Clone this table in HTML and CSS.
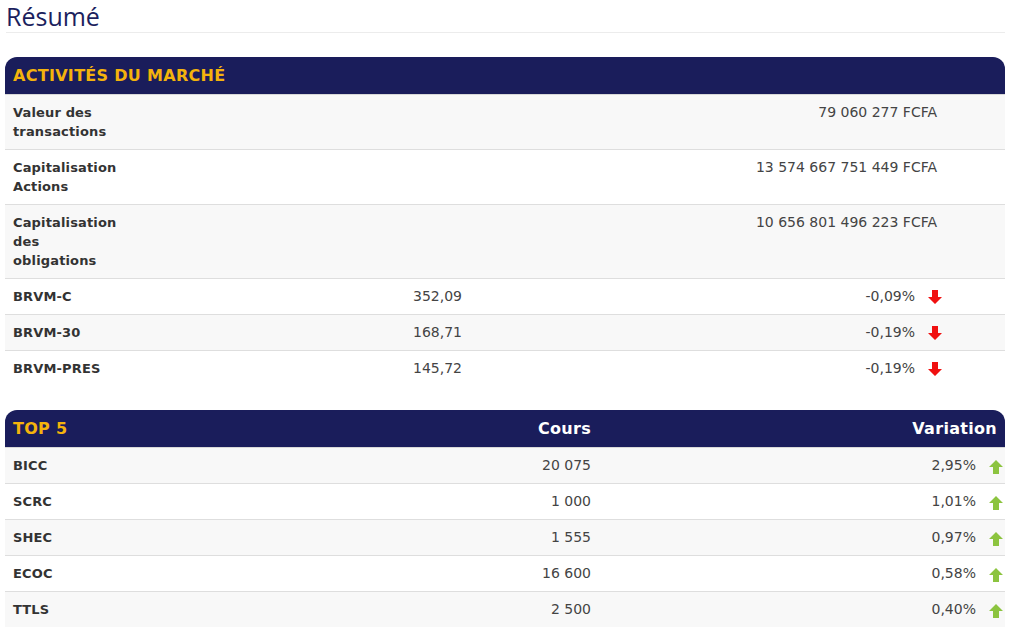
FILE: index.html
```html
<!DOCTYPE html>
<html lang="fr">
<head>
<meta charset="utf-8">
<title>Résumé</title>
<link rel="stylesheet" href="styles.css">
</head>
<body>
<div class="page">
  <h1 class="title">Résumé</h1>

  <section class="panel">
    <div class="panel-head"><span class="gold">ACTIVITÉS DU MARCHÉ</span></div>
    <div class="row big alt">
      <div class="lbl">Valeur des transactions</div>
      <div class="amt">79 060 277 FCFA</div>
      <div></div>
    </div>
    <div class="row big">
      <div class="lbl">Capitalisation Actions</div>
      <div class="amt">13 574 667 751 449 FCFA</div>
      <div></div>
    </div>
    <div class="row big alt">
      <div class="lbl">Capitalisation des obligations</div>
      <div class="amt">10 656 801 496 223 FCFA</div>
      <div></div>
    </div>
    <div class="row idx">
      <div class="lbl">BRVM-C</div>
      <div class="val">352,09</div>
      <div class="var">-0,09% <svg class="arr down" viewBox="0 0 14 14"><path d="M4 0h6v7h4l-7 7-7-7h4z" fill="#f01010"/></svg></div>
      <div></div>
    </div>
    <div class="row idx alt">
      <div class="lbl">BRVM-30</div>
      <div class="val">168,71</div>
      <div class="var">-0,19% <svg class="arr down" viewBox="0 0 14 14"><path d="M4 0h6v7h4l-7 7-7-7h4z" fill="#f01010"/></svg></div>
      <div></div>
    </div>
    <div class="row idx last">
      <div class="lbl">BRVM-PRES</div>
      <div class="val">145,72</div>
      <div class="var">-0,19% <svg class="arr down" viewBox="0 0 14 14"><path d="M4 0h6v7h4l-7 7-7-7h4z" fill="#f01010"/></svg></div>
      <div></div>
    </div>
  </section>

  <section class="panel top">
    <div class="panel-head top-head">
      <span class="gold">TOP 5</span>
      <span class="hcol">Cours</span>
      <span class="hcol">Variation</span>
    </div>
    <div class="row t5 alt">
      <div class="lbl">BICC</div>
      <div class="cours">20 075</div>
      <div class="var">2,95% <svg class="arr" viewBox="0 0 14 14"><path d="M4 14h6V7h4L7 0 0 7h4z" fill="#8cc43f"/></svg></div>
    </div>
    <div class="row t5">
      <div class="lbl">SCRC</div>
      <div class="cours">1 000</div>
      <div class="var">1,01% <svg class="arr" viewBox="0 0 14 14"><path d="M4 14h6V7h4L7 0 0 7h4z" fill="#8cc43f"/></svg></div>
    </div>
    <div class="row t5 alt">
      <div class="lbl">SHEC</div>
      <div class="cours">1 555</div>
      <div class="var">0,97% <svg class="arr" viewBox="0 0 14 14"><path d="M4 14h6V7h4L7 0 0 7h4z" fill="#8cc43f"/></svg></div>
    </div>
    <div class="row t5">
      <div class="lbl">ECOC</div>
      <div class="cours">16 600</div>
      <div class="var">0,58% <svg class="arr" viewBox="0 0 14 14"><path d="M4 14h6V7h4L7 0 0 7h4z" fill="#8cc43f"/></svg></div>
    </div>
    <div class="row t5 alt last">
      <div class="lbl">TTLS</div>
      <div class="cours">2 500</div>
      <div class="var">0,40% <svg class="arr" viewBox="0 0 14 14"><path d="M4 14h6V7h4L7 0 0 7h4z" fill="#8cc43f"/></svg></div>
    </div>
  </section>
</div>
</body>
</html>
```

FILE: styles.css
```css
* { box-sizing: border-box; }
html, body { margin: 0; padding: 0; background: #fff; }
body {
  font-family: "DejaVu Sans", Verdana, sans-serif;
  font-size: 14px;
  line-height: 19px;
  color: #444;
}
.page {
  width: 1000px;
  margin-left: 5px;
}
.title {
  font-family: "Open Sans", "Noto Sans", sans-serif;
  font-weight: 400;
  font-size: 25px;
  line-height: 32px;
  color: #1c1f5e;
  margin: 0 0 0 1px;
  padding: 0;
  height: 33px;
  border-bottom: 1px solid #ececec;
}
.panel { margin-top: 24px; }
.panel.top { margin-top: 24px; }
.panel-head {
  background: #1a1d5b;
  border-radius: 12px 12px 0 0;
  height: 38px;
  padding: 0 8px;
  display: flex;
  align-items: center;
  border-bottom: 1px solid #d8d8d8;
}
.gold {
  color: #f4b30c;
  font-weight: 700;
  font-size: 16px;
  letter-spacing: 0.3px;
}
.top-head {
  display: grid;
  grid-template-columns: 1fr 300px 406px;
  padding: 0;
}
.top-head .gold { padding-left: 8px; }
.hcol {
  color: #fff;
  font-weight: 700;
  font-size: 16px;
  letter-spacing: 0.3px;
  text-align: right;
  padding-right: 8px;
}
.row {
  display: grid;
  border-bottom: 1px solid #dedede;
  background: #fff;
}
.row.alt { background: #f8f8f8; }
.row.last { border-bottom: none; }
.row > div { padding: 8px 8px 8px 8px; }
.lbl { font-weight: 700; color: #333; font-size: 13px; letter-spacing: 0.15px; }
.big { grid-template-columns: 128px 1fr 60px; }
.amt { text-align: right; }
.idx { grid-template-columns: 400px 1fr 1fr 62px; }
.idx > .var { padding-right: 1px; }
.var {
  display: flex;
  justify-content: flex-end;
  align-items: center;
}
.arr {
  width: 14px;
  height: 14px;
  margin-left: 13px;
  margin-top: 3px;
  flex: none;
}
.arr.down { margin-top: 0; }
.t5 { grid-template-columns: 1fr 300px 406px; }
.cours { text-align: right; }
.t5 > .var { padding-right: 2px; }
```
